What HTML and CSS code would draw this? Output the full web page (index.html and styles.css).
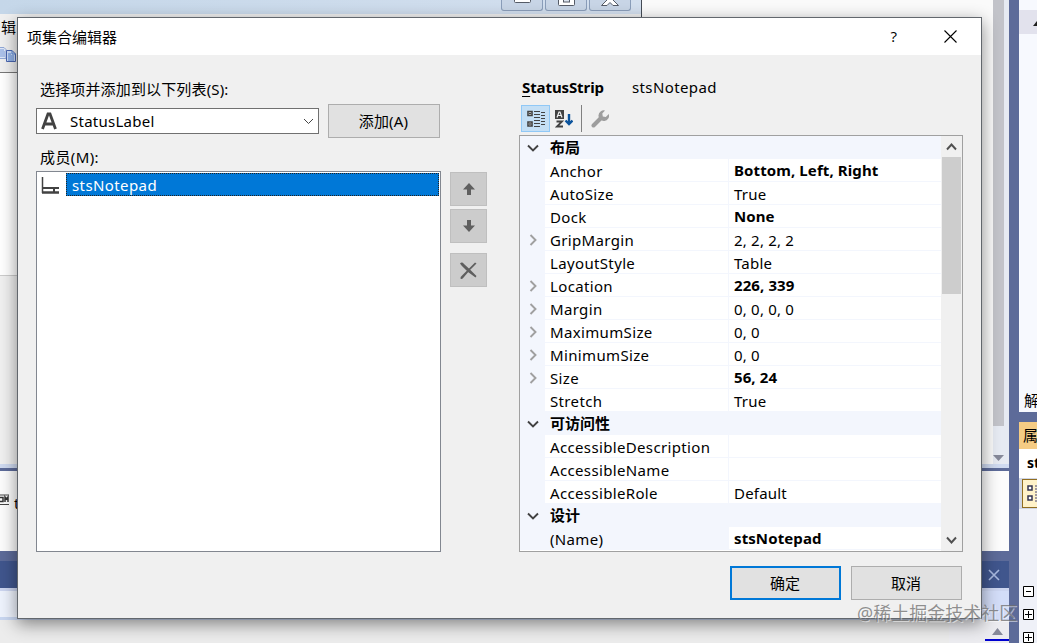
FILE: index.html
```
<!DOCTYPE html>
<html lang="zh-CN">
<head>
    <meta charset="UTF-8">
    <meta name="viewport" content="width=device-width, initial-scale=1.0">
    <title>项集合编辑器</title>
    <link rel="stylesheet" href="styles.css">
</head>
<body>
    <!-- IDE behind the dialog -->
    <div class="ide">
        <div class="workspace">
            <div class="designer">
                <div class="form-preview">
                    <div class="form-title">
                        <span class="form-btn"><svg width="17" height="8"><rect x="0.5" y="-5" width="16" height="7.5" rx="1" fill="#fff" stroke="#555b66"/></svg></span>
                        <span class="form-btn"><svg width="17" height="8"><rect x="0.5" y="-5" width="16" height="10.500" rx="1" fill="#fff" stroke="#555b66"/><rect x="5.500" y="-4" width="6" height="6" fill="#dce4ef" stroke="#555b66"/></svg></span>
                        <span class="form-btn"><svg width="18" height="8"><path d="M5-2 6 0 .5 5.500h5.500L9 2.500l3 3h5.500L12 0l1-2" fill="#fff" stroke="#555b66"/></svg></span>
                    </div>
                    <div class="form-menu">辑</div>
                    <div class="form-tools">
                        <svg width="18" height="18"><path d="M-3 1.500H4l2 2v9H-3z" fill="#dfe8f8" stroke="#91a7d5"/><path d="M-1 4h5M-1 6h6M-1 8h6M-1 10h6" stroke="#789bdb"/><path d="M6.500 4.500H12l3.500 3.500v7.500h-9z" fill="#cfdff8" stroke="#4a66b0"/><path d="M12 4.500V8h3.500M8 8h3M8 10h6M8 12h6M8 14h6" fill="none" stroke="#5584d7"/></svg>
                    </div>
                    <div class="form-client"></div>
                    <div class="form-rest"></div>
                </div>
                <div class="designer-space"></div>
                <div class="designer-scroll">
                    <div class="designer-thumb"></div>
                    <svg width="11" height="6"><path d="M0 0h11L5.500 6z" fill="#868999"/></svg>
                </div>
            </div>
            <div class="tray">
                <svg width="9" height="12"><path d="M0 1h9M0 10.500h9" stroke="#444"/><path d="M0 3.500h3v4H0M5 8V3l1.500 2L8 3v5" fill="none" stroke="#333" stroke-width="1.500"/></svg>
                <span>t</span>
            </div>
            <div class="tool-head">
                <svg width="12" height="12"><path d="M1 1l10 10M11 1 1 11" stroke="#a9b9df" stroke-width="1.600"/></svg>
            </div>
            <div class="tool-body">
                <div class="tool-content"></div>
                <div class="tool-scroll">
                    <svg width="11" height="7"><path d="M0 7h11L5.500 0z" fill="#868999"/></svg>
                    <div class="caret-line"></div>
                </div>
            </div>
        </div>
        <div class="side">
            <div class="solution">
                <div class="solution-node"><svg width="4" height="5"><path d="M0 5h4V0z" fill="#1e1e1e"/></svg></div>
                <div class="solution-tab">解</div>
            </div>
            <div class="props-title">属</div>
            <div class="props-object">st</div>
            <div class="props-tools">
                <div class="props-btn">
                    <svg width="12" height="18"><path d="M1 2h4v4H1zM1 12h4v4H1z" fill="#fff" stroke="#343452" stroke-width="1.500"/><path d="M8 2h4M8 5h4M8 8h4M8 11h4M8 14h4M8 17h4" stroke="#424275"/></svg>
                </div>
            </div>
            <div class="props-nodes">
                <svg width="11" height="11"><path d="M.5.5h10v10H.5zM3 5.500h5" fill="#fff" stroke="#000"/></svg>
                <svg width="11" height="11"><path d="M.5.5h10v10H.5zM2 5.500h7M5.500 2v7" fill="#fff" stroke="#000"/></svg>
                <svg width="11" height="11"><path d="M.5.5h10v10H.5zM2 5.500h7M5.500 2v7" fill="#fff" stroke="#000"/></svg>
            </div>
        </div>
    </div>

    <div class="dialog">
        <div class="titlebar">
            <span class="title">项集合编辑器</span>
            <span class="help">?</span>
            <svg class="close" width="13" height="13"><path d="M.5.5l12 12M12.500.5l-12 12" stroke="#000" stroke-width="1.100"/></svg>
        </div>
        <div class="dialog-body">
            <div class="members">
                <div class="label">选择项并添加到以下列表(S):</div>
                <div class="add-row">
                    <div class="combo">
                        <svg width="16" height="18" viewBox="0 0 16 18"><path d="M1.500 17 7 2h2l5.500 15M4 12h8" fill="none" stroke="#424242" stroke-width="2.800"/></svg>
                        <span>StatusLabel</span>
                        <svg width="11" height="7"><path d="M1 1l4.500 4.500L10 1" fill="none" stroke="#444"/></svg>
                    </div>
                    <button class="btn add">添加(A)</button>
                </div>
                <div class="label members-label">成员(M):</div>
                <div class="list-row">
                    <div class="list">
                        <div class="list-item">
                            <svg width="18" height="18"><path d="M1.500 1v16" stroke="#424242" stroke-width="1.500"/><path d="M1 12h17" stroke="#424242" stroke-width="2"/><path d="M1 16.500h17" stroke="#424242" stroke-width="2.500"/><path d="M13 12v4" stroke="#424242" stroke-width="2"/></svg>
                            <span>stsNotepad</span>
                        </div>
                    </div>
                    <div class="list-actions">
                        <button class="icon-btn"><svg width="12" height="12"><path d="M6 0l6 6.500H8V12H4V6.500H0z" fill="#5f5f5f"/></svg></button>
                        <button class="icon-btn"><svg width="12" height="12"><path d="M6 12l6-6.500H8V0H4v5.500H0z" fill="#5f5f5f"/></svg></button>
                        <button class="icon-btn remove"><svg width="18" height="18"><path d="M0 1.500Q2-.5 4 2l6 5.500 6.500 6.500-1 1.500L8 10 1.500 3.500z M16.500 1.500 10 8 4 15q-2 3-3.500 1.500 0-2 2.500-4L9 6.500l6-6z" fill="#5f5f5f"/></svg></button>
                    </div>
                </div>
            </div>
            <div class="properties">
                <div class="object-name"><b><u>S</u>tatusStrip</b><span>stsNotepad</span></div>
                <div class="toolbar">
                    <span class="tool active">
                        <svg width="18" height="18"><path d="M1 1.500h4v4H1zM1 12h4v4H1z" fill="#fff" stroke="#424242" stroke-width="1.600"/><path d="M2 3.500h2M3 2.500v2M2 14h2M3 13v2" stroke="#424242"/><path d="M7 1.500h6M7 4.500h6M7 7.500h6M7 10.500h6M7 13.500h6M7 16.500h6M14 2.500h4M14 5.500h4M14 8.500h4M14 11.500h4M14 14.500h4" stroke="#424242"/></svg>
                    </span>
                    <span class="tool sort">
                        <svg width="18" height="18"><path d="M0 0h9v9H0z" fill="#424242"/><path d="M2 7.500 4 2h1l2 5.500M3 5.500h3" fill="none" stroke="#f0f0f0" stroke-width="1.200"/><path d="M1.500 11.500H7L2 16.500h6" fill="none" stroke="#424242" stroke-width="1.800"/><path d="M14 4v10M10.500 10.500 14 14l3.500-3.500" fill="none" stroke="#0b539c" stroke-width="2.400"/></svg>
                    </span>
                    <span class="tool-sep"></span>
                    <span class="tool">
                        <svg width="18" height="18"><path d="M2.500 15.500l7-7" stroke="#9d9d9d" stroke-width="4" stroke-linecap="round"/><path d="M14 .5A5.300 5.300 0 1 0 17.800 4l-3 3-3-.5-.5-3z" fill="#9d9d9d"/></svg>
                    </span>
                </div>
                <div class="grid">
                    <div class="grid-rows" id="grid-rows">
                        <!-- Property rows are added by the script below -->
                    </div>
                    <div class="scrollbar">
                        <svg width="11" height="8"><path d="M1 6.500 5.500 1.500 10 6.500" fill="none" stroke="#505050" stroke-width="1.900"/></svg>
                        <div class="thumb"></div>
                        <svg width="11" height="8"><path d="M1 1.500 5.500 6.500 10 1.500" fill="none" stroke="#505050" stroke-width="1.900"/></svg>
                    </div>
                </div>
                <div class="buttons">
                    <button class="btn default">确定</button>
                    <button class="btn">取消</button>
                </div>
            </div>
        </div>
    </div>
    <div class="watermark">@稀土掘金技术社区</div>

    <script>
        // name, value, flags: c = category, e = expandable, b = bold value, s = selected
        const rows = [
            ['布局', '', 'c'],
            ['Anchor', 'Bottom, Left, Right', 'b'],
            ['AutoSize', 'True', ''],
            ['Dock', 'None', 'b'],
            ['GripMargin', '2, 2, 2, 2', 'e'],
            ['LayoutStyle', 'Table', ''],
            ['Location', '226, 339', 'eb'],
            ['Margin', '0, 0, 0, 0', 'e'],
            ['MaximumSize', '0, 0', 'e'],
            ['MinimumSize', '0, 0', 'e'],
            ['Size', '56, 24', 'eb'],
            ['Stretch', 'True', ''],
            ['可访问性', '', 'c'],
            ['AccessibleDescription', '', ''],
            ['AccessibleName', '', ''],
            ['AccessibleRole', 'Default', ''],
            ['设计', '', 'c'],
            ['(Name)', 'stsNotepad', 'bs']
        ];
        const down = '<svg width="12" height="8"><path d="M1 1.500l5 5 5-5" fill="none" stroke="#424242" stroke-width="1.900"/></svg>';
        const right = '<svg width="8" height="12"><path d="M1.500 1l5 5-5 5" fill="none" stroke="#a0a0a0" stroke-width="1.900"/></svg>';
        const grid = document.getElementById('grid-rows');

        rows.forEach(([name, value, flags]) => {
            const row = document.createElement('div');
            row.className = 'row';
            if (flags.includes('c')) row.classList.add('category');
            if (flags.includes('b')) row.classList.add('changed');
            if (flags.includes('s')) row.classList.add('selected');
            const icon = flags.includes('c') ? down : flags.includes('e') ? right : '';
            row.innerHTML = `<span class="gutter">${icon}</span><span class="name">${name}</span><span class="value">${value}</span>`;
            grid.appendChild(row);
        });
    </script>
</body>
</html>
```
FILE: styles.css
```
* {
    box-sizing: border-box;
}
body {
    margin: 0;
    width: 1037px;
    height: 643px;
    overflow: hidden;
    position: relative;
    font-family: "Noto Sans", "Noto Sans CJK SC", sans-serif;
    font-size: 15px;
    color: #000;
}
svg {
    display: block;
    flex: none;
}

/* IDE */
.ide {
    display: flex;
    height: 643px;
    background-color: #5d6b99;
}
.workspace {
    width: 1009px;
    margin-right: 10px;
    display: flex;
    flex-direction: column;
}
.designer {
    display: flex;
    height: 468px;
    border-bottom: 4px solid #cfdaf0;
}
.form-preview {
    width: 642px;
    border-right: 1px solid #444b55;
    display: flex;
    flex-direction: column;
}
.form-title {
    height: 14px;
    display: flex;
    justify-content: flex-end;
    gap: 2px;
    padding-right: 10px;
    background: linear-gradient(90deg, #c5d7e9, #d3dfee);
}
.form-btn {
    width: 42px;
    height: 11px;
    display: flex;
    justify-content: center;
    border: 1px solid #8a9db9;
    border-top: 0;
    border-radius: 0 0 3px 3px;
    background-color: #c8d5e6;
}
.form-menu {
    height: 28px;
    line-height: 27px;
    padding-left: 1px;
    background-color: #f0f0f0;
}
.form-tools {
    height: 31px;
    padding-top: 4px;
    background-color: #f0f0f0;
    border-bottom: 1px solid #777;
}
.form-client {
    height: 202px;
    background-color: #fff;
}
.form-rest {
    flex: 1;
    background-color: #f0f0f0;
    border-top: 1px solid #ccc;
}
.designer-space {
    flex: 1;
    background-color: #fafafa;
}
.designer-scroll {
    width: 16px;
    display: flex;
    flex-direction: column;
    background-color: #e6eaf2;
}
.designer-thumb {
    width: 11px;
    height: 426px;
    margin-bottom: 29px;
    background-color: #c2c3c9;
}
.tray {
    height: 80px;
    margin-top: 3px;
    padding-top: 21px;
    display: flex;
    gap: 5px;
    background-color: #fcfcfc;
    line-height: 22px;
}
.tray svg {
    margin-top: 2px;
}
.tool-head {
    height: 27px;
    margin-top: 10px;
    padding-right: 9px;
    display: flex;
    align-items: center;
    justify-content: flex-end;
    background-color: #40568d;
}
.tool-body {
    flex: 1;
    display: flex;
    border-top: 3px solid #ccd5f0;
}
.tool-content {
    flex: 1;
    background: linear-gradient(#eef3fd 26px, #c8d6f0 26px, #c8d6f0 29px, #ececec 29px);
}
.tool-scroll {
    width: 60px;
    display: flex;
    flex-direction: column;
    align-items: flex-end;
    background: linear-gradient(#d3ddf8 29px, #ececf0 29px);
}
.tool-scroll svg {
    margin: 37px 6px 4px 0;
}
.caret-line {
    width: 24px;
    height: 2px;
    background-color: #0000d0;
}
.side {
    width: 18px;
    display: flex;
    flex-direction: column;
    background-color: #eff1f8;
    overflow: hidden;
}
.solution {
    height: 424px;
    background-color: #f7f9fe;
    border-bottom: 10px solid #5d6b99;
    display: flex;
    flex-direction: column;
    justify-content: space-between;
}
.solution-node {
    margin-top: 10px;
    height: 24px;
    padding: 11px 0 0 14px;
    background-color: #e2e2ed;
}
.solution-tab {
    padding-left: 5px;
    line-height: 23px;
    white-space: nowrap;
}
.props-title {
    height: 27px;
    line-height: 27px;
    padding-left: 4px;
    background-color: #f5cc84;
}
.props-object {
    height: 29px;
    line-height: 28px;
    padding-left: 8px;
    background-color: #fff;
    font-weight: bold;
    font-size: 14px;
}
.props-tools {
    height: 31px;
    padding: 1px 0 1px 3px;
    background-color: #cfd6e5;
}
.props-btn {
    height: 29px;
    padding: 4px 0 0 4px;
    border: 1px solid #916d20;
    border-right: 0;
    background-color: #fff2c9;
}
.props-nodes {
    padding: 77px 0 0 4px;
    display: flex;
    flex-direction: column;
    gap: 12px;
}

/* Dialog */
.dialog {
    position: absolute;
    left: 17px;
    top: 17px;
    width: 965px;
    height: 602px;
    border: 1px solid #62676d;
    background-color: #f0f0f0;
    box-shadow: 0 5px 16px rgba(0, 0, 0, 0.45);
}
.titlebar {
    height: 37px;
    display: flex;
    align-items: center;
    padding: 0 24px 1px 9px;
    background-color: #fff;
}
.title {
    flex: 1;
}
.help {
    margin-right: 47px;
    font-family: "Open Sans", sans-serif;
}
.dialog-body {
    display: flex;
    justify-content: space-between;
    padding: 22px 18px 0;
}
.members {
    width: 451px;
}
.label {
    height: 27px;
    line-height: 25px;
    padding-left: 4px;
    letter-spacing: 0.15px;
}
.add-row {
    display: flex;
    align-items: center;
    gap: 9px;
}
.combo {
    width: 283px;
    height: 26px;
    display: flex;
    align-items: center;
    padding: 0 4px;
    border: 1px solid #707070;
    background-color: #fff;
}
.combo span {
    flex: 1;
    padding-left: 13px;
    letter-spacing: 0.25px;
}
.btn {
    width: 111px;
    height: 34px;
    padding: 0 1px 2px 0;
    border: 1px solid #adadad;
    background-color: #e1e1e1;
    color: #000;
    font: inherit;
}
.add {
    width: 112px;
    letter-spacing: 0.2px;
}
.members-label {
    margin-top: 7px;
    height: 26px;
    letter-spacing: 0.4px;
}
.list-row {
    display: flex;
    gap: 9px;
}
.list {
    width: 405px;
    height: 381px;
    padding: 1px;
    border: 1px solid #828790;
    background-color: #fff;
}
.list-item {
    height: 23px;
    display: flex;
    align-items: center;
    gap: 7px;
    padding-left: 3px;
}
.list-item span {
    flex: 1;
    height: 23px;
    line-height: 23px;
    padding-left: 5px;
    border: 1px dotted #222;
    background-color: #0078d7;
    color: #fff;
    letter-spacing: 0.4px;
}
.list-actions {
    padding-top: 1px;
    display: flex;
    flex-direction: column;
    gap: 3px;
}
.icon-btn {
    width: 37px;
    height: 34px;
    padding: 0;
    display: flex;
    align-items: center;
    justify-content: center;
    border: 1px solid #bfbfbf;
    background-color: #ccc;
}
.remove {
    margin-top: 7px;
    padding: 1px 0 0;
}
.properties {
    width: 444px;
}
.object-name {
    height: 28px;
    padding-left: 3px;
    line-height: 21px;
    display: flex;
    gap: 28px;
}
.object-name b {
    letter-spacing: -0.1px;
    line-height: 20px;
}
.object-name span {
    letter-spacing: 0.4px;
}
.object-name u {
    text-underline-offset: 3px;
}
.toolbar {
    height: 30px;
    display: flex;
    padding-left: 2px;
}
.tool {
    width: 29px;
    height: 27px;
    padding-right: 1px;
    display: flex;
    align-items: center;
    justify-content: center;
}
.tool.active {
    padding: 0;
    border: 1px solid #90c8f6;
    background-color: #c4dff5;
}
.sort {
    padding-top: 1px;
}
.tool-sep {
    width: 1px;
    height: 27px;
    margin: 0 4px 0 2px;
    background-color: #808080;
}
.grid {
    height: 417px;
    display: flex;
    border: 1px solid #a0a0a0;
    background-color: #fff;
    overflow: hidden;
}
.grid-rows {
    flex: 1;
}
.row {
    height: 23px;
    display: flex;
    line-height: 25px;
}
.gutter {
    width: 25px;
    display: flex;
    align-items: center;
    justify-content: center;
    background-color: #f3f6fd;
}
.name {
    width: 184px;
    padding-left: 5px;
    border-right: 1px solid #f3f6fd;
    border-bottom: 1px solid #f3f6fd;
    white-space: nowrap;
    letter-spacing: 0.35px;
}
.value {
    flex: 1;
    padding-left: 5px;
    border-bottom: 1px solid #f3f6fd;
    white-space: nowrap;
    letter-spacing: 0.2px;
}
.category,
.selected .name {
    background-color: #f3f6fd;
}
.category .name {
    line-height: 23px;
    letter-spacing: 0;
}
.category .name,
.changed .value {
    font-weight: bold;
}
.changed .value {
    line-height: 23px;
    letter-spacing: 0.1px;
}
.scrollbar {
    width: 21px;
    display: flex;
    flex-direction: column;
    align-items: center;
    padding: 7px 1px;
    background-color: #f0f0f0;
}
.thumb {
    align-self: stretch;
    height: 137px;
    margin: 6px 0 auto;
    background-color: #cdcdcd;
}
.buttons {
    display: flex;
    justify-content: flex-end;
    gap: 10px;
    padding: 14px 1px 0 0;
}
.default {
    border: 2px solid #0078d7;
}

.watermark {
    position: absolute;
    left: 857px;
    top: 600px;
    font-size: 18px;
    line-height: 26px;
    color: rgba(110, 110, 110, 0.75);
    text-shadow: 1px 1px 0 rgba(255, 255, 255, 0.5);
    white-space: nowrap;
}
```
